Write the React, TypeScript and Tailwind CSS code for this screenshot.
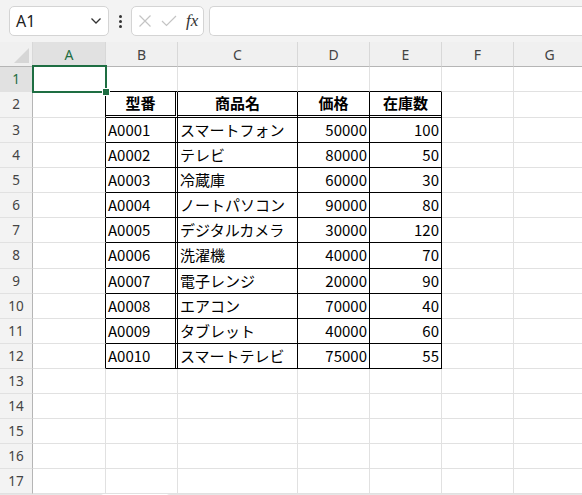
import React from "react";

const ui = { fontFamily: '"Noto Sans", "Liberation Sans", sans-serif' };
const cellFont = { fontFamily: '"Noto Sans CJK JP", "Noto Sans", sans-serif' };

const cols = [
  { key: "A", w: "w-[73px]" },
  { key: "B", w: "w-[72px]" },
  { key: "C", w: "w-[120px]" },
  { key: "D", w: "w-[72px]" },
  { key: "E", w: "w-[72px]" },
  { key: "F", w: "w-[72px]" },
  { key: "G", w: "w-[72px]" },
];

const products = [
  ["A0001", "スマートフォン", "50000", "100"],
  ["A0002", "テレビ", "80000", "50"],
  ["A0003", "冷蔵庫", "60000", "30"],
  ["A0004", "ノートパソコン", "90000", "80"],
  ["A0005", "デジタルカメラ", "30000", "120"],
  ["A0006", "洗濯機", "40000", "70"],
  ["A0007", "電子レンジ", "20000", "90"],
  ["A0008", "エアコン", "70000", "40"],
  ["A0009", "タブレット", "40000", "60"],
  ["A0010", "スマートテレビ", "75000", "55"],
];

const heights: Record<number, string> = { 2: "h-[26px]", 8: "h-[26px]" };

function cellValue(r: number, c: number) {
  if (r === 2) return ["", "型番", "商品名", "価格", "在庫数", "", ""][c];
  if (r >= 3 && r <= 12) {
    const p = products[r - 3];
    if (c >= 1 && c <= 4) return p[c - 1];
  }
  return "";
}

function Row({ r }: { r: number }) {
  const h = heights[r] ?? "h-[25px]";
  const inTable = r >= 2 && r <= 12;
  return (
    <div className={`flex ${h}`}>
      <div
        className={`w-[33px] shrink-0 flex items-center justify-center border-r border-r-[#b5b5b5] border-b border-b-[#e1e1e1] text-[13.5px] ${
          r === 1 ? "bg-[#e1e1e1] text-[#1e6e42]" : "bg-[#f3f3f3] text-[#444]"
        }`}
        style={ui}
      >
        {r}
      </div>
      {cols.map((col, c) => {
        let right = "border-r border-r-[#e1e1e1]";
        let bottom = "border-b border-b-[#e1e1e1]";
        if (inTable) {
          if (c === 0) right = "border-r border-r-black";
          if (c === 1) right = "border-r-[3px] border-r-black";
          if (c >= 2 && c <= 4) right = "border-r border-r-black";
        }
        if (c >= 1 && c <= 4) {
          if (r === 1 || (r >= 3 && r <= 12)) bottom = "border-b border-b-black";
          if (r === 2) bottom = "border-b-[3px] border-b-black";
        }
        const v = cellValue(r, c);
        let align = "justify-start pl-[2px]";
        if (r === 2) align = "justify-center font-bold";
        else if (c === 3 || c === 4) align = "justify-end pr-[2px]";
        return (
          <div
            key={col.key}
            className={`${col.w} shrink-0 flex items-center border-double bg-white text-[15px] text-black whitespace-nowrap overflow-hidden ${right} ${bottom} ${align}`}
            style={cellFont}
          >
            {v}
          </div>
        );
      })}
    </div>
  );
}

function Toolbar() {
  return (
    <div className="h-[42px] flex items-center gap-0 bg-[#f3f3f3] pl-[9px]" style={ui}>
      <div className="w-[100px] h-[30px] bg-white border border-[#d4d4d4] rounded-[5px] flex items-center justify-between pl-[6px] pr-[5px]">
        <span className="text-[16px] text-[#222]">A1</span>
        <svg width="12" height="8" viewBox="0 0 12 8" className="mr-[1px]">
          <path d="M1.5 1.5 L6 6 L10.5 1.5" fill="none" stroke="#333" strokeWidth="1.3" />
        </svg>
      </div>
      <div className="w-[22px] flex flex-col items-center gap-[2px]">
        <span className="w-[3px] h-[3px] rounded-full bg-[#333]" />
        <span className="w-[3px] h-[3px] rounded-full bg-[#333]" />
        <span className="w-[3px] h-[3px] rounded-full bg-[#333]" />
      </div>
      <div className="w-[73px] h-[30px] bg-white border border-[#d4d4d4] rounded-[5px] flex items-center pl-[6px] gap-[9px]">
        <svg width="14" height="14" viewBox="0 0 14 14">
          <path d="M1.5 1.5 L12.5 12.5 M12.5 1.5 L1.5 12.5" stroke="#c4c4c4" strokeWidth="1.2" fill="none" />
        </svg>
        <svg width="16" height="12" viewBox="0 0 16 12">
          <path d="M1 6 L5.5 10.5 L15 1" stroke="#c4c4c4" strokeWidth="1.2" fill="none" />
        </svg>
        <span
          className="text-[17px] italic text-[#333] leading-none -mt-[2px]"
          style={{ fontFamily: '"Liberation Serif", serif' }}
        >
          fx
        </span>
      </div>
      <div className="ml-[5px] flex-1 h-[30px] bg-white border border-[#d4d4d4] rounded-l-[5px] border-r-0" />
    </div>
  );
}

function ColumnHeader() {
  return (
    <div className="flex h-[25px] bg-[#f0f0f0]" style={ui}>
      <div className="w-[33px] shrink-0 border-r border-r-[#d8d8d8] border-b border-b-[#b5b5b5] flex items-end justify-end pr-[3px] pb-[3px]">
        <svg width="15" height="15" viewBox="0 0 15 15">
          <path d="M15 0 L15 15 L0 15 Z" fill="#d6d6d6" />
        </svg>
      </div>
      {cols.map((col, c) => (
        <div
          key={col.key}
          className={`${col.w} shrink-0 flex items-center justify-center border-r border-r-[#d8d8d8] border-b border-b-[#b5b5b5] text-[14px] ${
            c === 0 ? "bg-[#e1e1e1] text-[#1e6e42]" : "text-[#444]"
          }`}
        >
          {col.key}
        </div>
      ))}
    </div>
  );
}

export default function App() {
  const rows = Array.from({ length: 17 }, (_, i) => i + 1);
  return (
    <div className="w-[582px] h-[495px] overflow-hidden bg-white">
      <Toolbar />
      <ColumnHeader />
      <div className="relative">
        {rows.map((r) => (
          <Row key={r} r={r} />
        ))}
        {/* active cell A1 */}
        <div className="absolute left-[32px] top-[-2px] w-[75px] h-[28px] border-2 border-[#1e6e42] pointer-events-none">
          <span className="absolute right-[-4px] bottom-[-4px] w-[6px] h-[6px] bg-[#1e6e42] outline outline-1 outline-white" />
        </div>
      </div>
      <div className="flex h-[20px]">
        <div className="w-[104px] h-full bg-[#e6e6e6] rounded-tr-[4px]" />
        <div className="w-[62px] h-full bg-white" />
        <div className="flex-1 h-full bg-[#e6e6e6] rounded-tl-[4px]" />
      </div>
    </div>
  );
}
